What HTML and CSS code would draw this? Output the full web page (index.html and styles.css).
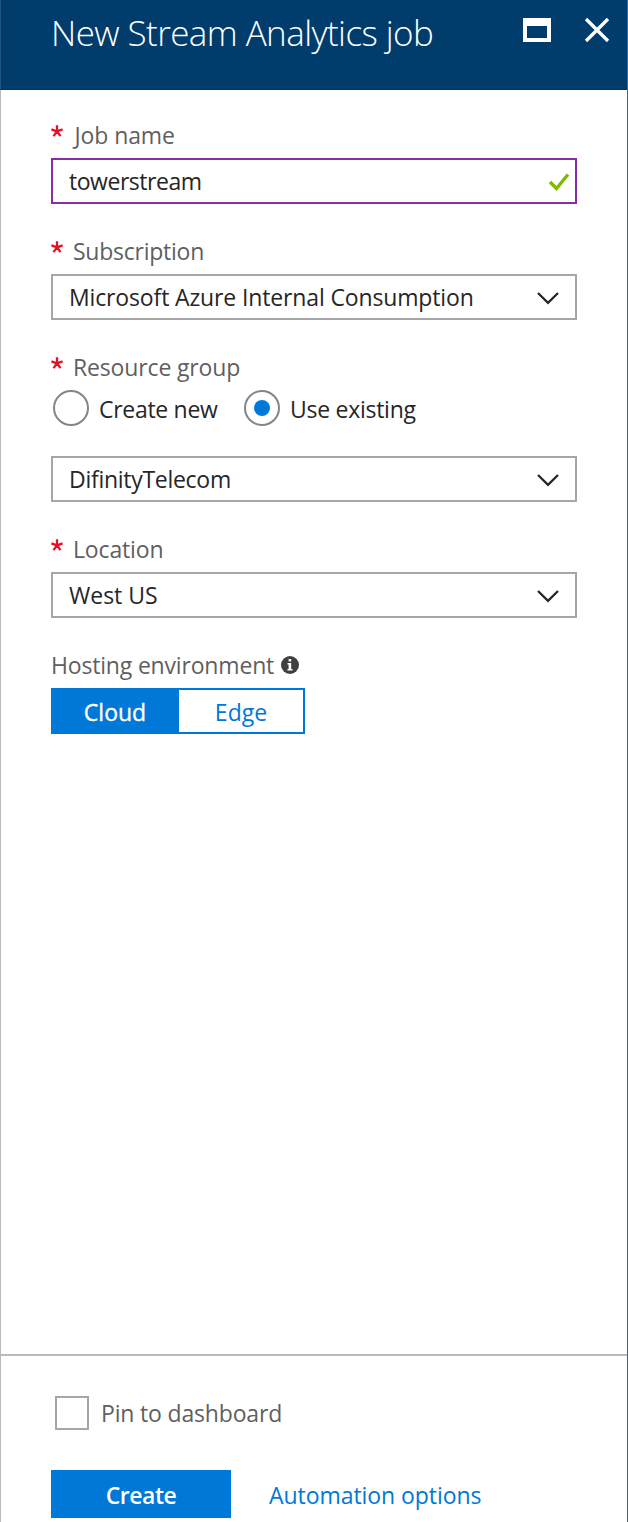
FILE: index.html
```html
<!DOCTYPE html>
<html lang="en">
<head>
<meta charset="utf-8">
<title>New Stream Analytics job</title>
<link rel="stylesheet" href="styles.css">
</head>
<body>
<main class="blade">
  <header class="header">
    <h1 class="title"><span class="t-title">New Stream Analytics job</span></h1>
    <div class="controls">
      <svg class="maximize" width="28" height="24" viewBox="0 0 28 24"><path fill="#fff" fill-rule="evenodd" d="M0 0H28V24H0ZM4 8V20H24V8Z"/></svg>
      <svg class="close" width="26" height="26" viewBox="0 0 26 26"><path d="M2 2L24 24M24 2L2 24" stroke="#fff" stroke-width="3.3"/></svg>
    </div>
  </header>
  <form class="form">
    <section class="field">
      <div class="label"><svg class="star" width="12" height="12" viewBox="0 0 12 12"><path d="M6 6.3V.2M6 6.3L.4 4.3M6 6.3L11.6 4.3M6 6.3L2.5 11.2M6 6.3L9.5 11.2"/></svg><span class="t-job">Job name</span></div>
      <div class="box active"><span class="t-tower">towerstream</span><svg class="check" width="22" height="20" viewBox="0 0 22 20"><path d="M2 10L8.5 16.5L20 2.5" fill="none" stroke="#7fba00" stroke-width="3.4"/></svg></div>
    </section>
    <section class="field">
      <div class="label"><svg class="star" width="12" height="12" viewBox="0 0 12 12"><path d="M6 6.3V.2M6 6.3L.4 4.3M6 6.3L11.6 4.3M6 6.3L2.5 11.2M6 6.3L9.5 11.2"/></svg><span class="t-sub">Subscription</span></div>
      <div class="box"><span class="t-ms">Microsoft Azure Internal Consumption</span><svg class="chevron" width="22" height="14" viewBox="0 0 22 14"><path d="M1 2L11 11.8L21 2"/></svg></div>
    </section>
    <section class="field">
      <div class="label"><svg class="star" width="12" height="12" viewBox="0 0 12 12"><path d="M6 6.3V.2M6 6.3L.4 4.3M6 6.3L11.6 4.3M6 6.3L2.5 11.2M6 6.3L9.5 11.2"/></svg><span class="t-res">Resource group</span></div>
      <div class="radios">
        <div class="option first"><i class="radio"></i><span class="t-cn">Create new</span></div>
        <div class="option"><i class="radio on"></i><span class="t-ue">Use existing</span></div>
      </div>
      <div class="box"><span class="t-dif">DifinityTelecom</span><svg class="chevron" width="22" height="14" viewBox="0 0 22 14"><path d="M1 2L11 11.8L21 2"/></svg></div>
    </section>
    <section class="field">
      <div class="label"><svg class="star" width="12" height="12" viewBox="0 0 12 12"><path d="M6 6.3V.2M6 6.3L.4 4.3M6 6.3L11.6 4.3M6 6.3L2.5 11.2M6 6.3L9.5 11.2"/></svg><span class="t-loc">Location</span></div>
      <div class="box"><span class="t-west">West US</span><svg class="chevron" width="22" height="14" viewBox="0 0 22 14"><path d="M1 2L11 11.8L21 2"/></svg></div>
    </section>
    <section class="field">
      <div class="label"><span class="t-host">Hosting environment</span><svg class="info" width="18" height="18" viewBox="0 0 18 18"><circle cx="9" cy="9" r="9" fill="#404040"/><path fill="#fff" d="M7.6 3H10.2V5.4H7.6ZM6.5 7H10.2V13H11.5V14.5H6.5V13H7.6V8.5H6.5Z"/></svg></div>
      <div class="segment"><div class="seg on"><span class="t-cloud">Cloud</span></div><div class="seg"><span class="t-edge">Edge</span></div></div>
    </section>
  </form>
  <footer class="footer">
    <div class="pin"><i class="checkbox"></i><span class="t-pin">Pin to dashboard</span></div>
    <div class="actions"><div class="create"><span class="t-create">Create</span></div><a class="link"><span class="t-auto">Automation options</span></a></div>
  </footer>
</main>
</body>
</html>
```
FILE: styles.css
```css
* { box-sizing: border-box; }
body { margin: 0; background: #fff; font-family: "Open Sans", "Noto Sans", sans-serif; font-size: 23px; color: #262626; white-space: nowrap; }
svg { display: block; flex: none; }
.blade { height: 1522px; display: flex; flex-direction: column; border-right: 1px solid #1f6eae; }
.header { height: 90px; padding: 0 17px 0 50px; display: flex; justify-content: space-between; background: #003c6c; border-left: 1px solid #1f5480; border-bottom: 1px solid #003460; }
.title { margin: 0; font-size: 35px; font-weight: 300; line-height: 65px; color: #fff; letter-spacing: -.58px; }
.controls { display: flex; gap: 33px; padding-top: 17px; }
.maximize { margin-top: 1px; }
.form { flex: 1; padding: 36px 50px 0; display: flex; flex-direction: column; gap: 38px; border-left: 1px solid #bababa; }
.label { height: 32px; display: flex; line-height: 19px; color: #5f5f5f; }
.star { margin: -1px 10px 0 0; }
.star path { stroke: #e81123; stroke-width: 2.3; }
.info { margin-left: 7px; }
.box { height: 46px; border: 2px solid #a6a6a6; padding: 0 16px; display: flex; justify-content: space-between; align-items: center; line-height: 42px; }
.box.active { border-color: #8a2da5; padding-right: 5px; }
.check { margin-top: 1px; }
.chevron { margin-top: 2px; }
.chevron path { fill: none; stroke: #262626; stroke-width: 2.3; }
.radios { display: flex; margin: 0 0 30px 2px; height: 36px; }
.option { display: flex; gap: 10px; line-height: 38px; }
.option.first { width: 191px; }
.radio { width: 36px; height: 36px; border: 2px solid #858585; border-radius: 50%; flex: none; }
.radio.on { padding: 8px; background: #0078d7 content-box; }
.segment { width: 254px; height: 46px; display: flex; border: 2px solid #0078d7; line-height: 44px; text-align: center; }
.seg { width: 124px; color: #0078d7; }
.seg.on { width: 126px; padding-right: 2px; background: #0078d7; color: #fff; -webkit-text-stroke: .35px #fff; }
.footer { height: 168px; border-top: 2px solid #bababa; border-left: 1px solid #bababa; padding: 40px 50px 0; }
.pin { display: flex; gap: 12px; margin-left: 4px; height: 34px; line-height: 35px; color: #5f5f5f; }
.checkbox { width: 34px; height: 34px; border: 2px solid #a6a6a6; }
.actions { display: flex; gap: 38px; margin-top: 40px; height: 48px; line-height: 51px; }
.create { width: 180px; background: #0078d7; color: #fff; font-weight: 600; text-align: center; }
.link { color: #0078d7; }

/* Per-string tracking */
.t-job { letter-spacing: -.1px; margin-left: 1.5px; }
.t-tower { letter-spacing: -.47px; }
.t-sub { letter-spacing: -.25px; }
.t-ms { letter-spacing: -.14px; }
.t-res { letter-spacing: -.15px; }
.t-cn { letter-spacing: -.3px; }
.t-ue { letter-spacing: -.27px; }
.t-dif { letter-spacing: -.28px; }
.t-loc { letter-spacing: -.15px; }
.t-host { letter-spacing: -.18px; }
.t-pin { letter-spacing: -.17px; }
.t-create { letter-spacing: -.45px; }
.t-auto { letter-spacing: -.06px; }
```
